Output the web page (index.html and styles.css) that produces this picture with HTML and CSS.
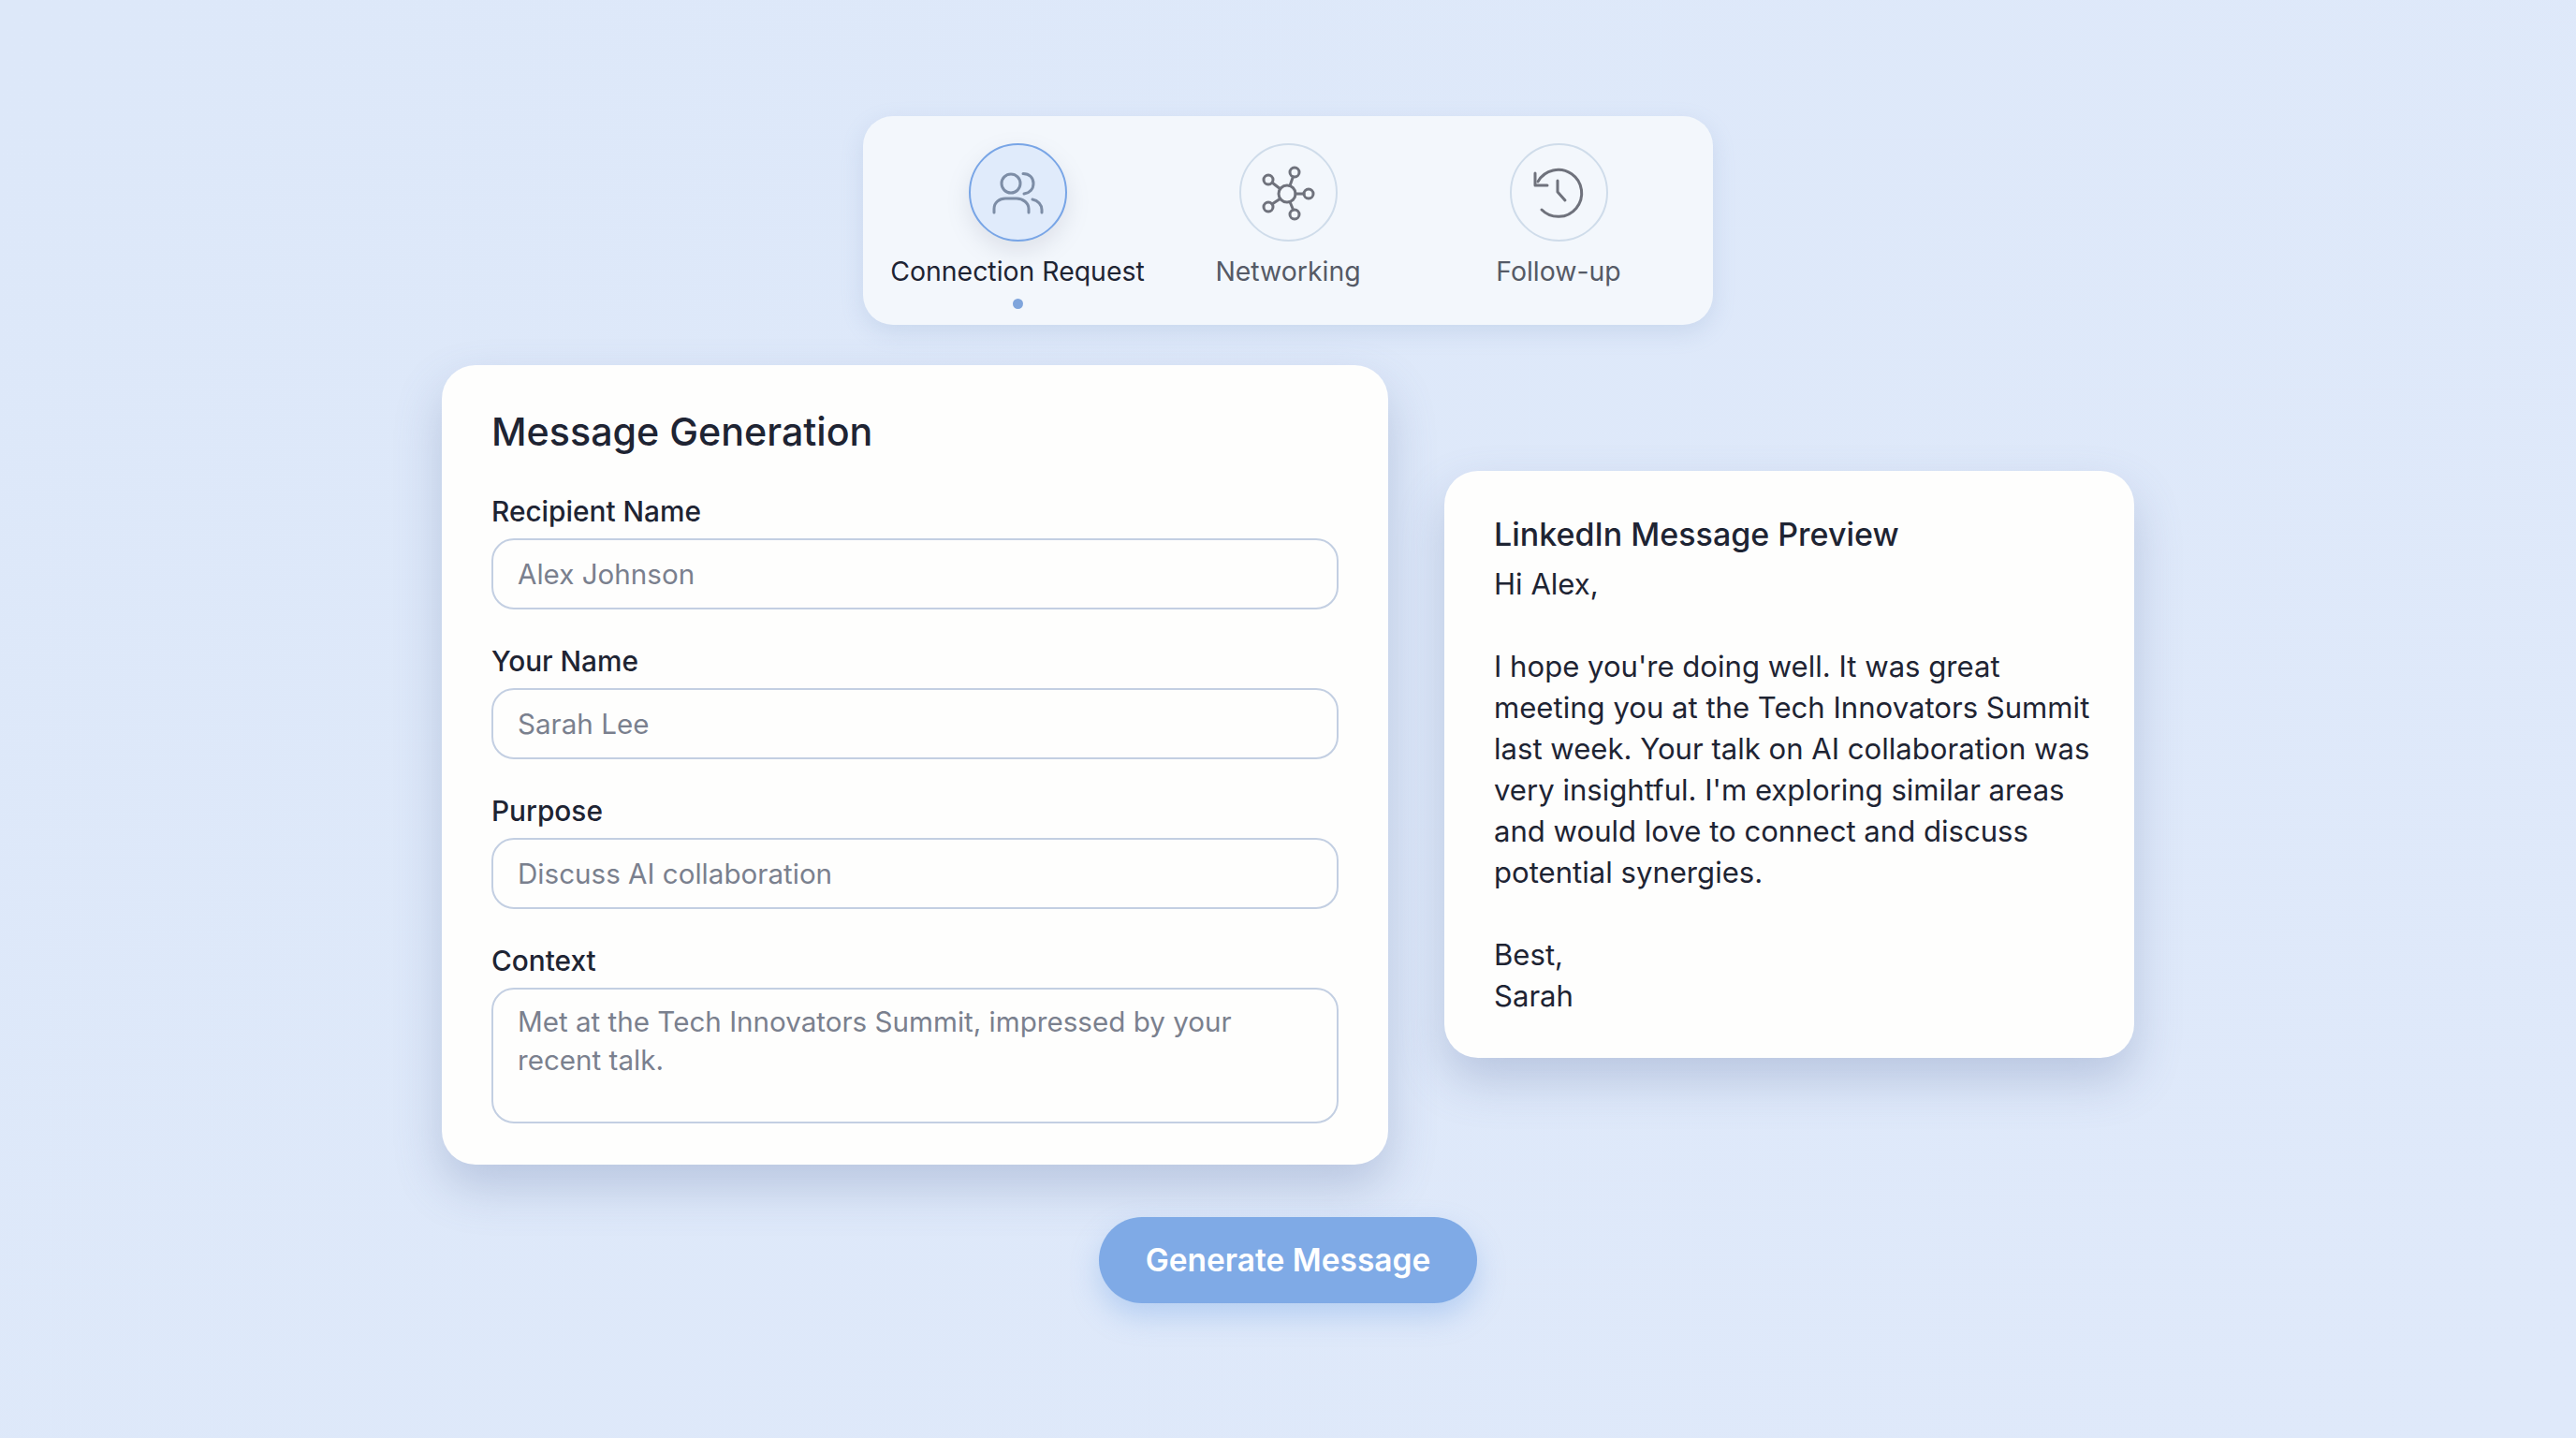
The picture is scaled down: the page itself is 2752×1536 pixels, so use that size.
FILE: index.html
```html
<!DOCTYPE html>
<html lang="en">
<head>
  <meta charset="UTF-8">
  <title>LinkedIn Message Generator</title>
  <link rel="stylesheet" href="styles.css">
</head>
<body>
  <nav class="tabs">
    <div class="tab active">
      <span class="tab-icon">
        <svg viewBox="0 0 60 60" width="60" height="60">
          <circle cx="23" cy="20" r="10"/>
          <path d="M36 9.500 C43 9.500 47 14 47 20 C47 26 43 30 37 31"/>
          <path d="M5 51 V47 C5 40 11 36 17 36 H29 C36 36 42 41 42 47 V51"/>
          <path d="M46 37 C52 38 56 43 56 48 V51"/>
        </svg>
      </span>
      <span class="tab-label">Connection Request</span>
      <span class="tab-dot"></span>
    </div>
    <div class="tab">
      <span class="tab-icon">
        <svg viewBox="0 -1 60 60" width="60" height="60">
          <circle cx="29" cy="30" r="9"/>
          <circle cx="37" cy="7" r="5"/>
          <circle cx="52" cy="30" r="5"/>
          <circle cx="37" cy="52" r="5"/>
          <circle cx="9" cy="44" r="5"/>
          <circle cx="9" cy="15" r="5"/>
          <path d="M32 21.500 L35.300 12 M38 30 H47 M32 38.500 L35.500 47 M21.700 35.300 L13 41 M21.700 24.700 L13 18"/>
        </svg>
      </span>
      <span class="tab-label">Networking</span>
    </div>
    <div class="tab">
      <span class="tab-icon">
        <svg viewBox="0 -1 60 60" width="60" height="60">
          <path d="M12 47 A25 25 0 1 0 8 17"/>
          <path d="M5 8 V21 H18"/>
          <path d="M29 16 V28 L37 37"/>
        </svg>
      </span>
      <span class="tab-label">Follow-up</span>
    </div>
  </nav>

  <main class="cards">
    <section class="card form-card">
      <h1>Message Generation</h1>
      <div class="field">
        <label>Recipient Name</label>
        <div class="box">Alex Johnson</div>
      </div>
      <div class="field">
        <label>Your Name</label>
        <div class="box">Sarah Lee</div>
      </div>
      <div class="field">
        <label>Purpose</label>
        <div class="box">Discuss AI collaboration</div>
      </div>
      <div class="field">
        <label>Context</label>
        <div class="box area">Met at the Tech Innovators Summit, impressed by your recent talk.</div>
      </div>
    </section>

    <section class="card preview-card">
      <h2>LinkedIn Message Preview</h2>
      <p>Hi Alex,</p>
      <p>I hope you're doing well. It was great meeting you at the Tech Innovators Summit last week. Your talk on AI collaboration was very insightful. I'm exploring similar areas and would love to connect and discuss potential synergies.</p>
      <p>Best,<br>Sarah</p>
    </section>
  </main>

  <button class="generate">Generate Message</button>
</body>
</html>
```

FILE: styles.css
```css
* {
  box-sizing: border-box;
}
body {
  margin: 0;
  height: 1536px;
  padding-top: 124px;
  display: flex;
  flex-direction: column;
  align-items: center;
  overflow: hidden;
  font-family: Inter, "Noto Sans", sans-serif;
  color: #1e2433;
  background: linear-gradient(135deg, #dde8f9, #dfe9fa);
}

.tabs {
  display: grid;
  grid-template-columns: repeat(3, 289px);
  justify-content: center;
  width: 908px;
  height: 223px;
  padding-top: 29px;
  background: #f3f7fc;
  border-radius: 32px;
  box-shadow: 0 8px 24px rgba(120, 150, 195, 0.2);
}
.tab {
  display: flex;
  flex-direction: column;
  align-items: center;
}
.tab-icon {
  display: flex;
  align-items: center;
  justify-content: center;
  width: 105px;
  height: 105px;
  border: 2px solid #cfdcea;
  border-radius: 50%;
}
.tab-icon svg {
  fill: none;
  stroke: #6f727c;
  stroke-width: 3;
  stroke-linecap: round;
  stroke-linejoin: round;
}
.tab-label {
  margin-top: 14px;
  font-size: 28.4px;
  line-height: 36px;
  white-space: nowrap;
  color: #555a66;
}
.tab-dot {
  width: 11px;
  height: 11px;
  margin-top: 11px;
  border-radius: 50%;
  background: #7fa5dc;
}
.active .tab-icon {
  background: #e0ebfb;
  border-color: #78a5e6;
  box-shadow: 0 10px 24px rgba(120, 130, 150, 0.18);
}
.active .tab-icon svg {
  stroke: #7d8da6;
}
.active .tab-label {
  color: #1e2433;
}

.cards {
  display: flex;
  align-items: center;
  gap: 60px;
  margin-top: 43px;
}
.card {
  background: #fefefd;
  border-radius: 36px;
  box-shadow: 0 24px 50px rgba(100, 120, 165, 0.3);
}

.form-card {
  width: 1011px;
  padding: 44px 53px 44px;
}
h1 {
  margin: 0 0 40px;
  font-size: 41.2px;
  line-height: 54px;
  font-weight: 500;
}
.field + .field {
  margin-top: 37px;
}
label {
  display: block;
  margin-bottom: 11px;
  font-size: 29.8px;
  line-height: 36px;
  font-weight: 500;
}
.box {
  height: 76px;
  padding: 0 26px;
  display: flex;
  align-items: center;
  border: 2px solid #c3cfe2;
  border-radius: 24px;
  background: #fefefd;
  font-size: 29.6px;
  color: #7a808e;
}
.box.area {
  display: block;
  height: 145px;
  padding-top: 14px;
  line-height: 41px;
}

.preview-card {
  width: 737px;
  margin-bottom: 2px;
  padding: 46px 40px 44px 53px;
}
h2 {
  margin: 0 0 9px;
  font-size: 34px;
  line-height: 44px;
  font-weight: 500;
}
.preview-card p {
  margin: 0 0 44px;
  font-size: 31.1px;
  line-height: 44px;
}
.preview-card p:last-child {
  margin-bottom: 0;
}

.generate {
  width: 404px;
  height: 92px;
  margin-top: 56px;
  border: none;
  border-radius: 46px;
  background: #7faae6;
  color: #fff;
  font-family: inherit;
  font-size: 33.5px;
  font-weight: 600;
  box-shadow: 0 14px 30px rgba(110, 160, 230, 0.35);
}
```
